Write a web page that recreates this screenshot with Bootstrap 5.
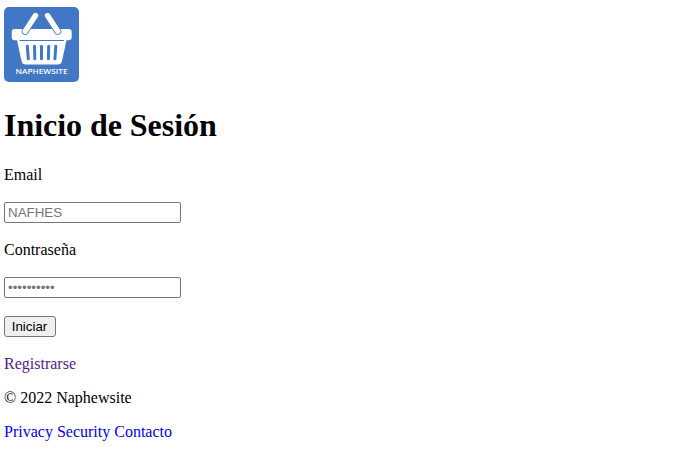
<!DOCTYPE html>
<html lang="es">
<head>
<meta charset="utf-8">
<meta name="viewport" content="width=device-width, initial-scale=1">
<title>Inicio de Sesión</title>
<link rel="stylesheet" href="https://cdn.jsdelivr.net/npm/bootstrap@5.3.0/dist/css/bootstrap.min.css">
<style>
body{font-family:"Liberation Serif",serif;font-size:16px;line-height:18px;color:#000;background:#fff}
.page{padding:7px 4px 0}
.logo{width:75px;height:75px}
.page h1{font-size:32px;line-height:36px;letter-spacing:-.04px;color:#000;margin:25px 0 23px}
.page label{line-height:18px}
.page .field{width:177px;height:21px;min-height:0;padding:1px 3px;border:1px solid #767676;border-radius:2px;font:13.333px "Liberation Sans",sans-serif;color:#000}
.page .field::placeholder{color:#757575}
.page .send{width:52px;height:21px;padding:0 1px 0 0;background:#efefef;border:1px solid #767676;border-radius:3px;font:13.333px "Liberation Sans",sans-serif;color:#000}
.stack{gap:18px}
.visited{color:#551a8b}
.plain{color:#00e}
.foot{gap:16px;margin-top:16px}
</style>
</head>
<body>
<main class="page">
<svg class="logo d-block" viewBox="0 0 75 75" role="img" aria-label="Naphewsite">
<rect width="75" height="75" rx="5" fill="#4277c5"/>
<path d="M10.500 22H64.500Q67.700 22 67.700 25V30Q67.700 33.200 64.500 33.200H62.500L58 54Q57.200 57.600 53.500 57.600H22Q18.300 57.600 17.500 54L13 33.200H10.500Q7.700 33.200 7.700 30V25Q7.700 22 10.500 22Z" fill="#fff"/>
<path d="M15.500 33.500H60" stroke="#4277c5" stroke-width="1"/>
<path d="M23.300 39.200L24.300 51.800M30.500 39.200L30.800 51.800M37.500 39.200V51.800M44.700 39.200L44.400 51.800M51.800 39.200L50.900 51.800" stroke="#4277c5" stroke-width="3" stroke-linecap="round"/>
<path d="M21.200 24.300L31.500 8.500M53.800 24.300L43.500 8.500" stroke="#4277c5" stroke-width="7" stroke-linecap="round"/>
<path d="M21.200 24.300L31.500 8.500M53.800 24.300L43.500 8.500" stroke="#fff" stroke-width="5.400" stroke-linecap="round"/>
<text x="11.500" y="67.300" textLength="52" lengthAdjust="spacingAndGlyphs" font-family="Open Sans, sans-serif" font-size="7" font-weight="600" fill="#fff">NAPHEWSITE</text>
</svg>
<h1 class="fw-bold">Inicio de Sesión</h1>
<form class="stack d-flex flex-column align-items-start">
<label for="email">Email</label>
<input id="email" class="form-control field" type="text" placeholder="NAFHES">
<label for="pass">Contraseña</label>
<input id="pass" class="form-control field" type="password" placeholder="••••••••••">
<button class="btn send" type="button">Iniciar</button>
<a class="visited text-decoration-none" href="#">Registrarse</a>
</form>
<footer class="foot d-flex flex-column">
<p class="m-0">© 2022 Naphewsite</p>
<nav><a class="plain text-decoration-none" href="#">Privacy</a> <a class="plain text-decoration-none" href="#">Security</a> <a class="plain text-decoration-none" href="#">Contacto</a></nav>
</footer>
</main>
<script src="https://cdn.jsdelivr.net/npm/bootstrap@5.3.0/dist/js/bootstrap.bundle.min.js"></script>
</body>
</html>
